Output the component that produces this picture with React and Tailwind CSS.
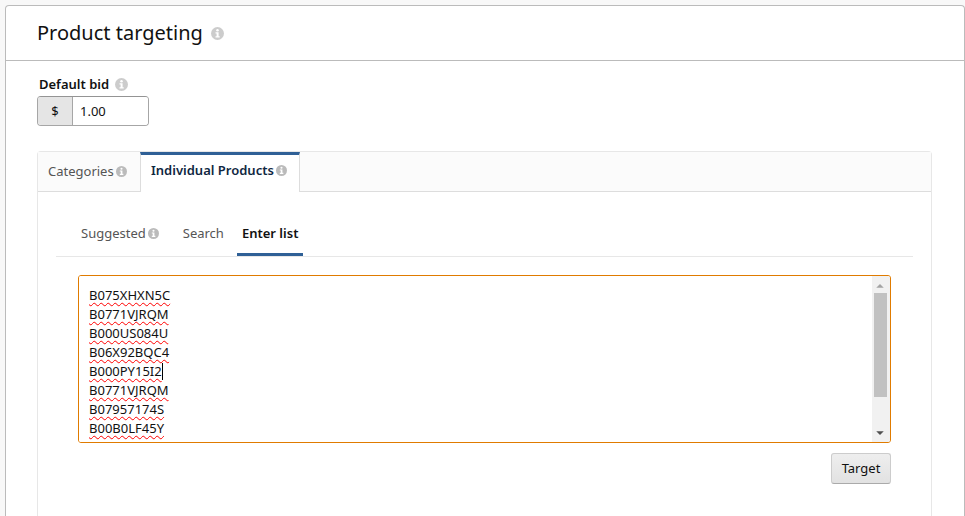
import React from "react";

const products = [
  "B075XHXN5C",
  "B0771VJRQM",
  "B000US084U",
  "B06X92BQC4",
  "B000PY15I2",
  "B0771VJRQM",
  "B07957174S",
  "B00B0LF45Y",
];

function InfoIcon({ className }) {
  return (
    <svg viewBox="0 0 13 13" aria-hidden="true" className={`shrink-0 ${className}`}>
      <circle cx="6.5" cy="6.5" r="6.5" fill="currentColor" />
      <circle cx="6.5" cy="3.3" r="1.25" fill="#fff" />
      <path d="M4.5 5.200H7.600V9.200H8.700V10.500H4.500V9.200H5.600V6.400H4.500Z" fill="#fff" />
    </svg>
  );
}

export default function App() {
  return (
    <div className="flex min-h-screen flex-col bg-[#f8f8f8] pt-[5px] pl-[5px] font-['Noto_Sans',sans-serif] text-[13px] leading-[19px] text-[#111]">
      <section className="flex flex-1 flex-col rounded-t border border-b-0 border-[#bbb] bg-white">
        <header className="flex h-[55px] items-center gap-2 border-b border-[#bbb] pl-[31px]">
          <h1 className="text-[20px] leading-7">Product targeting</h1>
          <InfoIcon className="size-[13px] text-[#ccc]" />
        </header>

        <div className="flex flex-1 flex-col pt-3.5 pr-8 pl-[31px]">
          <div className="flex items-center gap-1.5 pl-0.5">
            <label htmlFor="bid" className="font-semibold">
              Default bid
            </label>
            <InfoIcon className="size-[13px] text-[#ccc]" />
          </div>
          <div className="mt-0.5 flex h-[30px] w-28 overflow-hidden rounded-[4px] border border-[#a6a6a6] border-t-[#949494]">
            <span className="flex w-[35px] items-center justify-center border-r border-[#a6a6a6] bg-[#e5e5e5]">
              $
            </span>
            <input
              id="bid"
              type="text"
              defaultValue="1.00"
              className="min-w-0 flex-1 bg-white px-[7px] outline-none"
            />
          </div>

          <div className="mt-[25px] flex flex-1 flex-col rounded-t border border-b-0 border-[#e7e7e7]">
            <div role="tablist" className="flex h-10 bg-[#fbfbfb]">
              <button
                role="tab"
                aria-selected="false"
                className="flex w-[102px] items-center gap-0.5 border-b border-[#ddd] pl-2.5 text-[#555]"
              >
                Categories
                <InfoIcon className="size-[11px] text-[#bbb]" />
              </button>
              <button
                role="tab"
                aria-selected="true"
                className="flex w-40 items-center gap-0.5 border-x border-t-[3px] border-x-[#ddd] border-t-[#2f6096] bg-white pb-1.5 pl-2.5 font-semibold text-[#0f2741]"
              >
                Individual Products
                <InfoIcon className="size-[11px] text-[#bbb]" />
              </button>
              <div className="flex-1 border-b border-[#ddd]" />
            </div>

            <div className="px-[18px] pt-[22px]">
              <div role="tablist" className="flex h-[43px] border-b border-[#e7e7e7] pl-5">
                <button
                  role="tab"
                  aria-selected="false"
                  className="flex items-center gap-0.5 border-b-[3px] border-transparent px-[5px] text-[#555]"
                >
                  Suggested
                  <InfoIcon className="size-[11px] text-[#bbb]" />
                </button>
                <button
                  role="tab"
                  aria-selected="false"
                  className="ml-3.5 border-b-[3px] border-transparent px-[5px] text-[#555]"
                >
                  Search
                </button>
                <button
                  role="tab"
                  aria-selected="true"
                  className="ml-2 border-b-[3px] border-[#2f6096] px-[5px] font-semibold"
                >
                  Enter list
                </button>
              </div>

              <div className="mt-[18px] mr-[22px] ml-[22px]">
                <div className="relative flex h-[168px] overflow-hidden rounded-[3px] border border-[#e07b00]">
                  <textarea
                    aria-label="Product list"
                    spellCheck={false}
                    defaultValue={products.join("\n")}
                    className="min-w-0 flex-1 resize-none overflow-hidden bg-white pt-2.5 pl-2.5 underline decoration-[#f00] decoration-wavy decoration-1 underline-offset-2 outline-none [text-decoration-skip-ink:none]"
                  />
                  <div aria-hidden="true" className="absolute top-[87px] left-[83px] h-[17px] w-px bg-black" />
                  <div
                    aria-hidden="true"
                    className="flex w-[18px] flex-col items-center bg-[#f1f1f1] pr-0.5"
                  >
                    <svg viewBox="0 0 17 17" className="h-[17px] w-4 shrink-0">
                      <path d="M4.500 12L8.500 8L12.500 12Z" fill="#a3a3a3" />
                    </svg>
                    <div className="h-[104px] w-[13px] bg-[#c1c1c1]" />
                    <svg viewBox="0 0 17 17" className="mt-auto h-[17px] w-4 shrink-0">
                      <path d="M4.500 6L8.500 10L12.500 6Z" fill="#505050" />
                    </svg>
                  </div>
                </div>
                <div className="mt-2.5 flex justify-end">
                  <button className="h-[31px] w-[60px] rounded-[3px] border border-[#ccc] border-b-[#aaa] bg-linear-to-b from-[#eee] to-[#e2e2e2]">
                    Target
                  </button>
                </div>
              </div>
            </div>
          </div>
        </div>
      </section>
    </div>
  );
}
